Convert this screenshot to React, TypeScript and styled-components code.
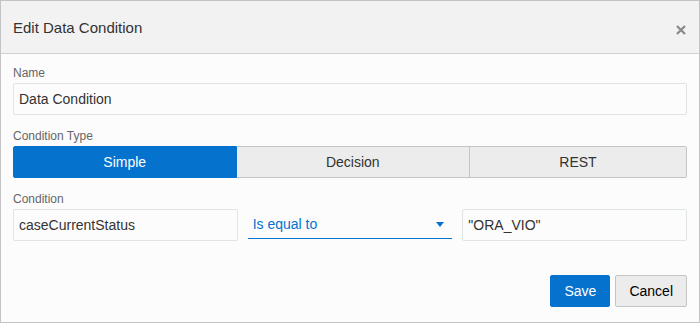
import React from "react";
import styled, { createGlobalStyle } from "styled-components";

const Global = createGlobalStyle`
  html, body { margin: 0; padding: 0; background: #ffffff; }
  body { font-family: "Liberation Sans", Arial, sans-serif; }
  * { box-sizing: border-box; }
`;

const Dialog = styled.div`
  width: 700px;
  height: 323px;
  border: 1px solid #c4c4c4;
  background: #fcfcfc;
  display: flex;
  flex-direction: column;
`;

const Header = styled.div`
  height: 53px;
  background: #f2f2f2;
  border-bottom: 1px solid #cfcfcf;
  display: flex;
  align-items: center;
  justify-content: space-between;
  padding: 0 12px 0 12px;
`;

const Title = styled.h1`
  margin: 0;
  font-size: 15px;
  font-weight: normal;
  color: #333333;
  line-height: 20px;
  padding-top: 1px;
`;

const CloseButton = styled.button`
  border: 0;
  background: transparent;
  padding: 0;
  width: 12px;
  height: 12px;
  display: flex;
  align-items: center;
  justify-content: center;
  margin-top: 5px;
  cursor: pointer;
`;

const Body = styled.div`
  flex: 1;
  display: flex;
  flex-direction: column;
  padding: 11px 12px 0 12px;
`;

const Field = styled.div<{ $gap?: number }>`
  display: flex;
  flex-direction: column;
  margin-top: ${(p) => p.$gap ?? 0}px;
`;

const Label = styled.label`
  font-size: 12px;
  line-height: 16px;
  color: #666666;
  margin-bottom: 2px;
`;

const TextInput = styled.input`
  height: 32px;
  border: 1px solid #dfe4e7;
  border-radius: 2px;
  background: #fcfcfc;
  padding: 0 5px;
  font-family: "Liberation Sans", Arial, sans-serif;
  font-size: 14px;
  color: #333333;
  outline: none;
  width: 100%;
`;

const Segmented = styled.div`
  display: flex;
  height: 32px;
`;

const Segment = styled.button<{ $selected?: boolean; $first?: boolean }>`
  flex: 1 1 auto;
  height: 32px;
  font-family: "Liberation Sans", Arial, sans-serif;
  font-size: 14px;
  padding: 0 6px;
  border: 1px solid ${(p) => (p.$selected ? "#0572ce" : "#c4c4c4")};
  border-left-width: ${(p) => (p.$first ? 1 : 0)}px;
  background: ${(p) => (p.$selected ? "#0572ce" : "#ececec")};
  color: ${(p) => (p.$selected ? "#ffffff" : "#333333")};
  border-radius: ${(p) => (p.$first ? "2px 0 0 2px" : "0")};
  &:last-child {
    border-radius: 0 2px 2px 0;
  }
`;

const ConditionRow = styled.div`
  display: grid;
  grid-template-columns: 1fr 1fr 1fr;
`;

const Select = styled.div`
  margin: 0 10px;
  height: 30px;
  border-bottom: 1px solid #0572ce;
  display: flex;
  align-items: center;
  justify-content: space-between;
  padding: 0 8px 0 5px;
  font-size: 14px;
  color: #0572ce;
`;

const Caret = styled.span`
  width: 0;
  height: 0;
  border-left: 4.5px solid transparent;
  border-right: 4.5px solid transparent;
  border-top: 5px solid #0572ce;
  margin-top: 2px;
`;

const Footer = styled.div`
  display: flex;
  justify-content: flex-end;
  gap: 5px;
  margin-top: 34px;
`;

const Button = styled.button<{ $primary?: boolean }>`
  height: 32px;
  padding: 0 13px;
  font-family: "Liberation Sans", Arial, sans-serif;
  font-size: 14px;
  border-radius: 2px;
  border: 1px solid ${(p) => (p.$primary ? "#0572ce" : "#c4c4c4")};
  background: ${(p) => (p.$primary ? "#0572ce" : "#ececec")};
  color: ${(p) => (p.$primary ? "#ffffff" : "#000000")};
`;

export default function App() {
  return (
    <>
      <Global />
      <Dialog>
        <Header>
          <Title>Edit Data Condition</Title>
          <CloseButton aria-label="Close">
            <svg width="10" height="10" viewBox="0 0 10 10">
              <path d="M1 1 L9 9 M9 1 L1 9" stroke="#888888" strokeWidth="2.2" />
            </svg>
          </CloseButton>
        </Header>
        <Body>
          <Field>
            <Label>Name</Label>
            <TextInput defaultValue="Data Condition" />
          </Field>
          <Field $gap={13}>
            <Label>Condition Type</Label>
            <Segmented>
              <Segment $selected $first>Simple</Segment>
              <Segment>Decision</Segment>
              <Segment>REST</Segment>
            </Segmented>
          </Field>
          <Field $gap={13}>
            <Label>Condition</Label>
            <ConditionRow>
              <TextInput defaultValue="caseCurrentStatus" />
              <Select>
                <span>Is equal to</span>
                <Caret />
              </Select>
              <TextInput defaultValue={'"ORA_VIO"'} />
            </ConditionRow>
          </Field>
          <Footer>
            <Button $primary>Save</Button>
            <Button>Cancel</Button>
          </Footer>
        </Body>
      </Dialog>
    </>
  );
}
